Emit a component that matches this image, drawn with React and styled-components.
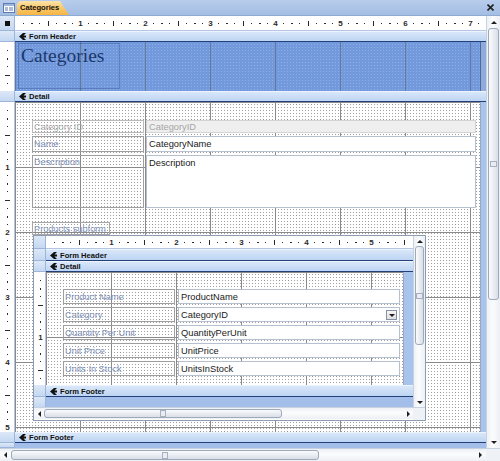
import React from "react";
import styled, { createGlobalStyle, css } from "styled-components";

const INCH = 65;

const GlobalStyle = createGlobalStyle`
  html, body {
    margin: 0;
    padding: 0;
    background: #ffffff;
  }
  body {
    font-family: "Liberation Sans", Arial, sans-serif;
  }
`;

// dotted design grid with inch lines
const designGrid = (base, dot, line, hLines) => css`
  background-color: ${base};
  background-image: linear-gradient(90deg, ${line} 1px, transparent 1px),
    ${hLines ? `linear-gradient(${line} 1px, transparent 1px),` : ""}
    linear-gradient(90deg, ${base} 2px, transparent 2px),
    linear-gradient(${base} 2px, ${dot} 2px);
  background-size: ${INCH}px 100%, ${hLines ? `100% ${INCH}px,` : ""} 3px 3px,
    3px 3px;
`;

const Window = styled.div`
  width: 500px;
  height: 461px;
  display: flex;
  flex-direction: column;
  overflow: hidden;
  background: #fff;
`;

const TabBar = styled.div`
  height: 16px;
  flex: none;
  display: flex;
  align-items: flex-end;
  box-sizing: border-box;
  background: linear-gradient(#b8cdec, #a3bde3);
  border-bottom: 1px solid #8ea9d2;
`;

const TabIconBox = styled.div`
  width: 17px;
  height: 15px;
  display: flex;
  align-items: center;
  justify-content: center;
`;

const Tab = styled.div`
  height: 14px;
  width: 52px;
  box-sizing: border-box;
  padding: 2px 0 0 3px;
  font-size: 7.6px;
  font-weight: bold;
  color: #111;
  background: linear-gradient(#fde4ab, #f9c664 55%, #f6b445);
  clip-path: polygon(0 100%, 0 3px, 3px 0, calc(100% - 9px) 0, 100% 100%);
`;

const TabSpacer = styled.div`
  flex: 1;
`;

const CloseBox = styled.div`
  width: 20px;
  height: 15px;
  display: flex;
  align-items: center;
  justify-content: center;
`;

const Body = styled.div`
  display: flex;
  height: 432px;
  flex: none;
`;

const Main = styled.div`
  flex: 1;
  display: flex;
  flex-direction: column;
  min-width: 0;
`;

const Row = styled.div`
  display: flex;
  height: ${(p) => p.$h}px;
  flex: none;
`;

const RulerCorner = styled.div`
  width: ${(p) => p.$w}px;
  flex: none;
  box-sizing: border-box;
  background: linear-gradient(#dde8f7, #c4d8f2);
  border-right: 1px solid #9db5d9;
  border-bottom: 1px solid #9db5d9;
  display: flex;
  align-items: center;
  justify-content: center;
`;

const CornerMark = styled.div`
  width: 5px;
  height: 5px;
  background: #111;
`;

const HRulerBox = styled.div`
  flex: 1;
  overflow: hidden;
  background: #fff;
  border-bottom: 1px solid #b3c7e4;
  box-sizing: border-box;
`;

const VRulerBox = styled.div`
  width: ${(p) => p.$w}px;
  flex: none;
  overflow: hidden;
  background: #fff;
  border-right: 1px solid #b3c7e4;
  box-sizing: border-box;
`;

const BandBar = styled.div`
  flex: 1;
  display: flex;
  align-items: center;
  gap: 3px;
  padding-left: 4px;
  box-sizing: border-box;
  background: linear-gradient(#d9e7f9, #bdd4f3);
  border-top: 1px solid #eef4fd;
  border-bottom: 1px solid #23407a;
  font-size: 7.6px;
  font-weight: bold;
  color: #111;
  white-space: nowrap;
`;

const HeaderCanvas = styled.div`
  flex: 1;
  box-sizing: border-box;
  padding: 1px 0 0 3px;
  ${designGrid("#7299db", "#8eafe8", "#66789c", false)}
`;

const TitleBox = styled.div`
  width: 102px;
  height: 46px;
  box-sizing: border-box;
  border: 1px solid rgba(35, 60, 115, 0.3);
  padding: 0 0 0 2px;
`;

const Title = styled.div`
  font-family: "Liberation Serif", "Times New Roman", serif;
  font-size: 19.5px;
  color: #1d386c;
  line-height: 24px;
`;

const Canvas = styled.div`
  flex: 1;
  box-sizing: border-box;
  padding: ${(p) => p.$pad};
  ${designGrid("#ffffff", "#9e9e9e", "#8a8a8a", true)}
`;

const Edge = styled.div`
  width: ${(p) => p.$w}px;
  flex: none;
  box-sizing: border-box;
  background: ${(p) => (p.$dark ? "#8eabdc" : "#a8c4ec")};
  border-left: 1px solid ${(p) => (p.$dark ? "#50689a" : "#9aa9c0")};
`;

const FooterFill = styled.div`
  flex: 1;
  background: #a3bfe9;
`;

const FieldGrid = styled.div`
  display: grid;
  grid-template-columns: ${(p) => p.$cols};
  grid-template-rows: ${(p) => p.$rows};
  column-gap: ${(p) => p.$cgap}px;
  row-gap: 3px;
`;

const Label = styled.div`
  box-sizing: border-box;
  border: 1px solid ${(p) => (p.$disabled ? "#bababa" : "#9e9e9e")};
  color: ${(p) => (p.$disabled ? "#a9a9a9" : "#7f91b6")};
  font-size: 9.2px;
  line-height: ${(p) => (p.$top ? "11px" : "normal")};
  padding: ${(p) => (p.$top ? "1px 1px" : "0 1px")};
  display: flex;
  align-items: ${(p) => (p.$top ? "flex-start" : "center")};
  white-space: nowrap;
  overflow: visible;
`;

const Field = styled.div`
  position: relative;
  box-sizing: border-box;
  border: 1px solid ${(p) => (p.$disabled ? "#d3d3d3" : "#b6c1cf")};
  background: ${(p) => (p.$disabled ? "#efefef" : "#ffffff")};
  color: ${(p) => (p.$disabled ? "#a6a6a6" : "#1a1a1a")};
  font-size: 9.3px;
  padding: ${(p) => (p.$top ? "2px 2px" : "0 2px")};
  display: flex;
  align-items: ${(p) => (p.$top ? "flex-start" : "center")};
  white-space: nowrap;
`;

const DropButton = styled.div`
  position: absolute;
  right: 2px;
  top: 2px;
  width: 11px;
  height: 10px;
  box-sizing: border-box;
  border: 1px solid #8390a6;
  background: linear-gradient(#f7f7f7, #dedede);
  display: flex;
  align-items: center;
  justify-content: center;
`;

const SubLabel = styled.div`
  margin: 14px 0 0 0;
  width: 78px;
  height: 13px;
  box-sizing: border-box;
  border: 1px solid #a7a7a7;
  color: #8496ba;
  font-size: 9.2px;
  padding: 0 1px;
  display: flex;
  align-items: center;
  white-space: nowrap;
`;

const SubForm = styled.div`
  margin-left: 1px;
  width: 393px;
  height: 186px;
  box-sizing: border-box;
  border: 1px solid #8e9cb3;
  background: #fff;
  display: flex;
  flex-direction: column;
`;

const SubBody = styled.div`
  flex: 1;
  display: flex;
  min-height: 0;
`;

const Track = styled.div`
  display: flex;
  flex-direction: ${(p) => (p.$vertical ? "column" : "row")};
  ${(p) =>
    p.$vertical
      ? css`
          width: ${p.$size}px;
          border-left: 1px solid #c7d1df;
        `
      : css`
          height: ${p.$size}px;
          border-top: 1px solid #c7d1df;
        `}
  flex: ${(p) => (p.$vertical ? "none" : "1")};
  box-sizing: border-box;
  background: linear-gradient(
    ${(p) => (p.$vertical ? "90deg" : "180deg")},
    #eef1f5,
    #fbfcfd 45%,
    #eceff4
  );
`;

const ArrowBox = styled.div`
  flex: none;
  width: ${(p) => p.$w}px;
  height: ${(p) => p.$h}px;
  display: flex;
  align-items: center;
  justify-content: center;
`;

const Tri = styled.div`
  width: 0;
  height: 0;
  ${(p) =>
    p.$dir === "up"
      ? css`
          border-left: 3px solid transparent;
          border-right: 3px solid transparent;
          border-bottom: 3px solid #1e1e1e;
        `
      : p.$dir === "down"
      ? css`
          border-left: 3px solid transparent;
          border-right: 3px solid transparent;
          border-top: 3px solid #1e1e1e;
        `
      : p.$dir === "left"
      ? css`
          border-top: 3px solid transparent;
          border-bottom: 3px solid transparent;
          border-right: 3px solid #1e1e1e;
        `
      : css`
          border-top: 3px solid transparent;
          border-bottom: 3px solid transparent;
          border-left: 3px solid #1e1e1e;
        `}
`;

const Thumb = styled.div`
  flex: none;
  box-sizing: border-box;
  border: 1px solid #9ea9b9;
  border-radius: 3px;
  display: flex;
  align-items: center;
  justify-content: center;
  ${(p) =>
    p.$vertical
      ? css`
          height: ${p.$len}px;
          margin: 0 1px;
          background: linear-gradient(90deg, #fafbfc, #d9dfe8);
        `
      : css`
          width: ${p.$len}px;
          margin: 1px 0;
          background: linear-gradient(#fafbfc, #d9dfe8);
        `}
`;

const Grip = styled.div`
  width: ${(p) => (p.$vertical ? 5 : 4)}px;
  height: ${(p) => (p.$vertical ? 4 : 5)}px;
  border: 1px solid #a6b0c0;
  background: #e9edf2;
`;

const Fill = styled.div`
  flex: 1;
`;

const BottomRow = styled.div`
  display: flex;
  height: 13px;
  flex: none;
`;

const ScrollCorner = styled.div`
  width: ${(p) => p.$w}px;
  flex: none;
  background: #eef1f5;
  border-top: 1px solid #c7d1df;
  box-sizing: border-box;
`;

function Ruler({ length, thick, vertical }) {
  const step = INCH / 8;
  const c = Math.floor(thick / 2);
  const marks = [];
  for (let i = 1; i * step < length - 2; i++) {
    const p = Math.round(i * step);
    if (i % 8 === 0) {
      const n = i / 8;
      marks.push(
        vertical ? (
          <text key={i} x={c + 0.5} y={p + 3} textAnchor="middle">
            {n}
          </text>
        ) : (
          <text key={i} x={p + 0.5} y={c + 3} textAnchor="middle">
            {n}
          </text>
        )
      );
    } else if (i % 4 === 0) {
      marks.push(
        vertical ? (
          <rect key={i} x={c - 2} y={p} width={5} height={1} />
        ) : (
          <rect key={i} x={p} y={c - 2} width={1} height={5} />
        )
      );
    } else {
      marks.push(
        vertical ? (
          <rect key={i} x={c} y={p} width={1} height={i % 2 ? 1 : 2} />
        ) : (
          <rect key={i} x={p} y={c} width={i % 2 ? 1 : 2} height={1} />
        )
      );
    }
  }
  return (
    <svg
      width={vertical ? thick : length}
      height={vertical ? length : thick}
      fill="#2a2a2a"
      fontSize="8"
      fontWeight="bold"
      fontFamily="Liberation Sans, Arial, sans-serif"
      style={{ display: "block" }}
    >
      {marks}
    </svg>
  );
}

function BandIcon() {
  return (
    <svg width="7" height="7" viewBox="0 0 7 7" style={{ display: "block" }}>
      <path d="M0 3.5 L4 0 L7 0 L4.5 2.5 L7 2.5 L7 4.5 L4.5 4.5 L7 7 L4 7 Z" fill="#111" />
    </svg>
  );
}

function Band({ h, corner, label }) {
  return (
    <Row $h={h}>
      <RulerCorner $w={corner} />
      <BandBar>
        <BandIcon />
        {label}
      </BandBar>
    </Row>
  );
}

function VScroll({ size, thumb }) {
  return (
    <Track $vertical $size={size}>
      <ArrowBox $w={size - 1} $h={size - 2}>
        <Tri $dir="up" />
      </ArrowBox>
      <Thumb $vertical $len={thumb}>
        <Grip $vertical />
      </Thumb>
      <Fill />
      <ArrowBox $w={size - 1} $h={size - 2}>
        <Tri $dir="down" />
      </ArrowBox>
    </Track>
  );
}

function HScroll({ size, thumb }) {
  return (
    <Track $size={size}>
      <ArrowBox $w={size - 2} $h={size - 1}>
        <Tri $dir="left" />
      </ArrowBox>
      <Thumb $len={thumb}>
        <Grip />
      </Thumb>
      <Fill />
      <ArrowBox $w={size - 2} $h={size - 1}>
        <Tri $dir="right" />
      </ArrowBox>
    </Track>
  );
}

const productFields = [
  ["Product Name", "ProductName"],
  ["Category", "CategoryID", true],
  ["Quantity Per Unit", "QuantityPerUnit"],
  ["Unit Price", "UnitPrice"],
  ["Units In Stock", "UnitsInStock"],
];

function ProductsSubform() {
  return (
    <SubForm>
      <SubBody>
        <Main>
          <Row $h={13}>
            <RulerCorner $w={12} />
            <HRulerBox>
              <Ruler length={367} thick={12} />
            </HRulerBox>
          </Row>
          <Band h={12} corner={12} label="Form Header" />
          <Band h={11} corner={12} label="Detail" />
          <Row $h={113}>
            <VRulerBox $w={12}>
              <Ruler vertical length={113} thick={12} />
            </VRulerBox>
            <Canvas $pad="17px 0 0 17px">
              <FieldGrid $cols="112px 222px" $rows="repeat(5, 15px)" $cgap={3}>
                {productFields.map(([label, value, combo]) => (
                  <React.Fragment key={label}>
                    <Label>{label}</Label>
                    <Field>
                      {value}
                      {combo && (
                        <DropButton>
                          <Tri $dir="down" />
                        </DropButton>
                      )}
                    </Field>
                  </React.Fragment>
                ))}
              </FieldGrid>
            </Canvas>
            <Edge $w={10} />
          </Row>
          <Band h={12} corner={12} label="Form Footer" />
          <Row $h={11}>
            <RulerCorner $w={12} />
            <FooterFill />
          </Row>
        </Main>
        <VScroll size={12} thumb={99} />
      </SubBody>
      <BottomRow>
        <HScroll size={12} thumb={238} />
        <ScrollCorner $w={12} />
      </BottomRow>
    </SubForm>
  );
}

export default function App() {
  return (
    <>
      <GlobalStyle />
      <Window>
        <TabBar>
          <TabIconBox>
            <svg width="12" height="10" viewBox="0 0 12 10">
              <rect x="0.5" y="0.5" width="11" height="9" fill="#fff" stroke="#5f7cae" />
              <rect x="1" y="1" width="10" height="2" fill="#9db6dc" />
              <rect x="2" y="4.5" width="3" height="1" fill="#5f7cae" />
              <rect x="6" y="4.5" width="4" height="1" fill="#5f7cae" />
              <rect x="2" y="6.5" width="3" height="1" fill="#5f7cae" />
              <rect x="6" y="6.5" width="4" height="1" fill="#5f7cae" />
            </svg>
          </TabIconBox>
          <Tab>Categories</Tab>
          <TabSpacer />
          <CloseBox>
            <svg width="7" height="7" viewBox="0 0 7 7">
              <path d="M0.5 0.5 L6.5 6.5 M6.5 0.5 L0.5 6.5" stroke="#222" strokeWidth="1.6" />
            </svg>
          </CloseBox>
        </TabBar>
        <Body>
          <Main>
            <Row $h={15}>
              <RulerCorner $w={15}>
                <CornerMark />
              </RulerCorner>
              <HRulerBox>
                <Ruler length={471} thick={14} />
              </HRulerBox>
            </Row>
            <Band h={11} corner={15} label="Form Header" />
            <Row $h={49}>
              <VRulerBox $w={15}>
                <Ruler vertical length={49} thick={14} />
              </VRulerBox>
              <HeaderCanvas>
                <TitleBox>
                  <Title>Categories</Title>
                </TitleBox>
              </HeaderCanvas>
              <Edge $w={6} $dark />
            </Row>
            <Band h={11} corner={15} label="Detail" />
            <Row $h={330}>
              <VRulerBox $w={15}>
                <Ruler vertical length={330} thick={14} />
              </VRulerBox>
              <Canvas $pad="18px 0 0 17px">
                <FieldGrid $cols="112px 330px" $rows="13px 16px 53px" $cgap={2}>
                  <Label $disabled>Category ID</Label>
                  <Field $disabled>CategoryID</Field>
                  <Label>Name</Label>
                  <Field>CategoryName</Field>
                  <Label $top>Description</Label>
                  <Field $top>Description</Field>
                </FieldGrid>
                <SubLabel>Products subform</SubLabel>
                <ProductsSubform />
              </Canvas>
              <Edge $w={6} />
            </Row>
            <Band h={11} corner={15} label="Form Footer" />
            <Row $h={5}>
              <RulerCorner $w={15} />
              <FooterFill />
            </Row>
          </Main>
          <VScroll size={14} thumb={272} />
        </Body>
        <BottomRow>
          <HScroll size={13} thumb={308} />
          <ScrollCorner $w={14} />
        </BottomRow>
      </Window>
    </>
  );
}
